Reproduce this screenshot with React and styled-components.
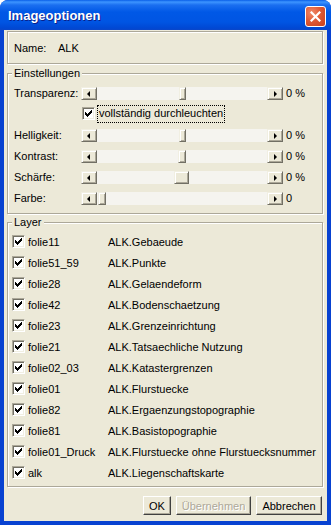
import React from "react";
import styled, { createGlobalStyle } from "styled-components";

const GlobalStyle = createGlobalStyle`
  html, body {
    margin: 0;
    padding: 0;
    background: #ffffff;
  }
  body {
    font-family: "Liberation Sans", Arial, sans-serif;
    font-size: 11px;
    color: #000;
  }
`;

const Window = styled.div`
  width: 331px;
  height: 525px;
  display: flex;
  flex-direction: column;
  background: #0842d1;
  border-radius: 8px 8px 0 0;
  overflow: hidden;
  box-sizing: border-box;
`;

const TitleBar = styled.div`
  height: 30px;
  flex: none;
  display: flex;
  align-items: center;
  justify-content: space-between;
  padding: 0 5px 0 8px;
  box-sizing: border-box;
  background: linear-gradient(
    to bottom,
    #0a5fe8 0px,
    #3d95ff 2px,
    #1b6ff0 5px,
    #0058e6 12px,
    #0055e3 22px,
    #0048d4 28px,
    #0a46c8 30px
  );
`;

const Title = styled.div`
  color: #fff;
  font-weight: bold;
  font-size: 13px;
  text-shadow: 1px 1px 0 #0a1f8a;
  padding-top: 1px;
`;

const CloseButton = styled.div`
  width: 21px;
  height: 21px;
  box-sizing: border-box;
  border: 1px solid #ffffff;
  border-radius: 3px;
  background: radial-gradient(circle at 30% 30%, #f08a6a 0%, #e05a36 45%, #c8401a 100%);
  display: flex;
  align-items: center;
  justify-content: center;
  margin-top: 2px;
`;

const Body = styled.div`
  flex: 1;
  margin: 0 4px 4px 4px;
  background: #ece9d8;
  padding: 1px 3px 5px 3px;
  display: flex;
  flex-direction: column;
`;

const Etched = styled.div`
  position: relative;
  border: 1px solid #aca899;
  box-shadow: inset 1px 1px 0 #ffffff, 1px 1px 0 #ffffff;
  margin-right: 1px;
`;

const NameBox = styled(Etched)`
  height: 33px;
  display: flex;
  align-items: center;
  padding-left: 6px;
  padding-top: 1px;
  box-sizing: border-box;
`;

const NameLabel = styled.span`
  width: 44px;
`;

const Group = styled(Etched)`
  margin-top: ${(p) => p.$gap}px;
  padding: ${(p) => p.$top}px 0 ${(p) => p.$bottom}px 0;
`;

const Legend = styled.div`
  position: absolute;
  top: -7px;
  left: 4px;
  padding: 0 2px;
  background: #ece9d8;
  line-height: 13px;
`;

const SettingRow = styled.div`
  height: 21px;
  display: flex;
  align-items: center;
  padding-left: 6px;
`;

const SettingLabel = styled.div`
  width: 67px;
  flex: none;
`;

const ScrollBar = styled.div`
  display: flex;
  width: 202px;
  height: 13px;
  margin-top: 2px;
`;

const Raised = styled.div`
  box-sizing: border-box;
  height: 13px;
  background: #ece9d8;
  border: 1px solid;
  border-color: #f1efe2 #716f64 #716f64 #f1efe2;
  box-shadow: inset 1px 1px 0 #ffffff, inset -1px -1px 0 #aca899;
`;

const ArrowButton = styled(Raised)`
  width: 16px;
  flex: none;
  display: flex;
  align-items: center;
  justify-content: center;
`;

const Arrow = styled.div`
  width: 0;
  height: 0;
  border-top: 3px solid transparent;
  border-bottom: 3px solid transparent;
  ${(p) =>
    p.$dir === "left"
      ? "border-right: 3px solid #000; margin-left: -1px;"
      : "border-left: 3px solid #000; margin-left: 1px;"}
`;

const Track = styled.div`
  flex: 1;
  display: flex;
  background: #f5f4ef;
`;

const Thumb = styled(Raised)`
  flex: none;
  width: ${(p) => p.$width}px;
  margin-left: ${(p) => p.$offset}px;
`;

const Value = styled.div`
  margin-left: 3px;
`;

const Box = styled.div`
  width: 13px;
  height: 13px;
  flex: none;
  box-sizing: border-box;
  background: #fff;
  border: 1px solid;
  border-color: #aca899 #ffffff #ffffff #aca899;
  box-shadow: inset 1px 1px 0 #716f64, inset -1px -1px 0 #f1efe2;
  display: flex;
  align-items: center;
  justify-content: center;
  margin-left: ${(p) => p.$indent || 0}px;
`;

const FocusLabel = styled.div`
  margin-left: 2px;
  border: 1px dotted #000;
  padding: 1px 1px 2px 1px;
  line-height: 13px;
`;

const LayerRow = styled.div`
  height: 21px;
  display: flex;
  align-items: center;
  padding-left: 4px;
`;

const LayerName = styled.div`
  width: 80px;
  margin-left: 3px;
  flex: none;
`;

const ButtonBar = styled.div`
  display: flex;
  justify-content: flex-end;
  gap: 5px;
  margin-top: 9px;
  padding-right: 2px;
`;

const Button = styled.div`
  height: 19px;
  width: ${(p) => p.$width}px;
  box-sizing: border-box;
  display: flex;
  align-items: center;
  justify-content: center;
  background: #ece9d8;
  border: 1px solid;
  border-color: #ffffff #404040 #404040 #ffffff;
  box-shadow: inset -1px -1px 0 #aca899;
  color: ${(p) => (p.$disabled ? "#aca899" : "#000")};
  text-shadow: ${(p) => (p.$disabled ? "1px 1px 0 #ffffff" : "none")};
`;

const CheckMark = () => {
  const cols = [2, 3, 4, 3, 2, 1, 0];
  return (
    <svg width="7" height="7" viewBox="0 0 7 7" shapeRendering="crispEdges">
      {cols.map((y, x) => (
        <rect key={x} x={x} y={y} width="1" height="3" fill="#000" />
      ))}
    </svg>
  );
};

const Checkbox = ({ indent }) => (
  <Box $indent={indent}>
    <CheckMark />
  </Box>
);

const Slider = ({ offset, width }) => (
  <ScrollBar>
    <ArrowButton>
      <Arrow $dir="left" />
    </ArrowButton>
    <Track>
      <Thumb $offset={offset} $width={width} />
    </Track>
    <ArrowButton>
      <Arrow $dir="right" />
    </ArrowButton>
  </ScrollBar>
);

const settings = [
  { label: "Helligkeit:", offset: 82, width: 7, value: "0 %" },
  { label: "Kontrast:", offset: 81, width: 8, value: "0 %" },
  { label: "Schärfe:", offset: 77, width: 15, value: "0 %" },
  { label: "Farbe:", offset: 1, width: 8, value: "0" },
];

const layers = [
  ["folie11", "ALK.Gebaeude"],
  ["folie51_59", "ALK.Punkte"],
  ["folie28", "ALK.Gelaendeform"],
  ["folie42", "ALK.Bodenschaetzung"],
  ["folie23", "ALK.Grenzeinrichtung"],
  ["folie21", "ALK.Tatsaechliche Nutzung"],
  ["folie02_03", "ALK.Katastergrenzen"],
  ["folie01", "ALK.Flurstuecke"],
  ["folie82", "ALK.Ergaenzungstopographie"],
  ["folie81", "ALK.Basistopographie"],
  ["folie01_Druck", "ALK.Flurstuecke ohne Flurstuecksnummer"],
  ["alk", "ALK.Liegenschaftskarte"],
];

export default function App() {
  return (
    <>
      <GlobalStyle />
      <Window>
        <TitleBar>
          <Title>Imageoptionen</Title>
          <CloseButton>
            <svg width="11" height="11" viewBox="0 0 11 11">
              <path
                d="M1.5 1.5 L9.5 9.5 M9.5 1.5 L1.5 9.5"
                stroke="#fff"
                strokeWidth="2.2"
                strokeLinecap="square"
              />
            </svg>
          </CloseButton>
        </TitleBar>
        <Body>
          <NameBox>
            <NameLabel>Name:</NameLabel>
            <span>ALK</span>
          </NameBox>

          <Group $gap={9} $top={8} $bottom={5}>
            <Legend>Einstellungen</Legend>
            <SettingRow>
              <SettingLabel>Transparenz:</SettingLabel>
              <Slider offset={82} width={7} />
              <Value>0 %</Value>
            </SettingRow>
            <SettingRow>
              <SettingLabel />
              <Checkbox indent={1} />
              <FocusLabel>vollständig durchleuchten</FocusLabel>
            </SettingRow>
            {settings.map((s) => (
              <SettingRow key={s.label}>
                <SettingLabel>{s.label}</SettingLabel>
                <Slider offset={s.offset} width={s.width} />
                <Value>{s.value}</Value>
              </SettingRow>
            ))}
          </Group>

          <Group $gap={8} $top={8} $bottom={3}>
            <Legend>Layer</Legend>
            {layers.map(([name, title]) => (
              <LayerRow key={name}>
                <Checkbox />
                <LayerName>{name}</LayerName>
                <span>{title}</span>
              </LayerRow>
            ))}
          </Group>

          <ButtonBar>
            <Button $width={28}>OK</Button>
            <Button $width={75} $disabled>
              Übernehmen
            </Button>
            <Button $width={66}>Abbrechen</Button>
          </ButtonBar>
        </Body>
      </Window>
    </>
  );
}
